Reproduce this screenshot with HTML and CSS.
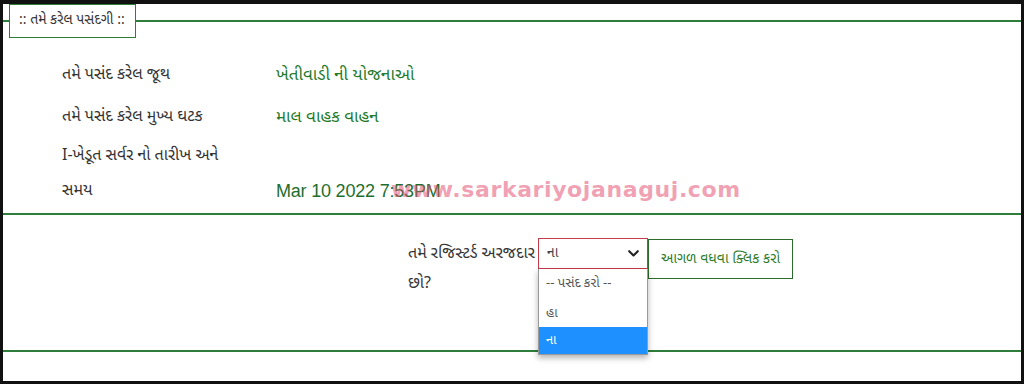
FILE: index.html
```html
<!DOCTYPE html>
<html lang="gu">
<head>
<meta charset="utf-8">
<title>તમે કરેલ પસંદગી</title>
<link rel="stylesheet" href="styles.css">
</head>
<body>
<div class="frame">
  <fieldset class="selection">
    <legend class="legend">:: તમે કરેલ પસંદગી ::</legend>
    <div class="rows">
      <div class="label row-single">તમે પસંદ કરેલ જૂથ</div>
      <div class="value row-single">ખેતીવાડી ની યોજનાઓ</div>
      <div class="label row-single">તમે પસંદ કરેલ મુખ્ય ઘટક</div>
      <div class="value row-single">માલ વાહક વાહન</div>
      <div class="label row-double">I-ખેડૂત સર્વર નો તારીખ અને<br>સમય</div>
      <div class="value row-double date"><span>Mar 10 2022 7:53PM</span></div>
    </div>
  </fieldset>
  <div class="form-row">
    <div class="question">તમે રજિસ્ટર્ડ અરજદાર<br>છો?</div>
    <div class="select-wrap">
      <div class="select">
        <span>ના</span>
        <svg class="chevron" width="11" height="7" viewBox="0 0 11 7"><path d="M1.2 1.2 L5.5 5.5 L9.8 1.2" fill="none" stroke="#222" stroke-width="2.1" stroke-linecap="round" stroke-linejoin="round"/></svg>
      </div>
      <ul class="dropdown">
        <li class="opt">-- પસંદ કરો --</li>
        <li class="opt">હા</li>
        <li class="opt selected">ના</li>
      </ul>
    </div>
    <button class="next" type="button">આગળ વધવા ક્લિક કરો</button>
  </div>
  <div class="footer"></div>
  <div class="watermark">www.sarkariyojanaguj.com</div>
</div>
</body>
</html>
```
FILE: styles.css
```css
* { box-sizing: border-box; }
html, body { margin: 0; padding: 0; background: #fff; }
body {
  font-family: "Noto Sans Gujarati", "Lohit Gujarati", "Shruti", "Noto Sans", "DejaVu Sans", sans-serif;
  color: #333;
}
.frame {
  position: relative;
  width: 1024px;
  height: 384px;
  border-style: solid;
  border-color: #111;
  border-width: 4px 3px 3px 3px;
  background: #fff;
  overflow: hidden;
}
.selection {
  margin: 0;
  padding: 0;
  border: 0;
  border-top: 2px solid #2f7d3a;
  border-bottom: 2px solid #2f7d3a;
  min-width: 0;
}
.legend {
  margin-left: 6px;
  padding: 0 10px 0 9px;
  height: 34px;
  line-height: 32px;
  border: 1px solid #2f7d3a;
  font-size: 14px;
  color: #333;
}
.rows {
  display: grid;
  grid-template-columns: 214px 1fr;
  padding: 17px 0 4px 59px;
}
.label { font-size: 16px; }
.value { font-size: 17px; color: #237a2a; }
.row-single { line-height: 42px; }
.row-double { line-height: 35px; }
.date {
  display: flex;
  align-items: flex-end;
  font-family: "Liberation Sans", Arial, sans-serif;
  font-size: 18px;
  letter-spacing: -0.2px;
  color: #1f6e2e;
}
.form-row {
  display: flex;
  align-items: flex-start;
  padding: 21px 0 0 405px;
  height: 137px;
  border-bottom: 2px solid #2f7d3a;
}
.question {
  font-size: 16px;
  line-height: 30px;
  padding-top: 4px;
  width: 130px;
}
.select-wrap {
  position: relative;
  width: 110px;
  margin-top: 2px;
}
.select {
  display: flex;
  align-items: center;
  justify-content: space-between;
  height: 31px;
  padding: 0 8px 0 8px;
  border: 1.5px solid #c73a4a;
  font-size: 14px;
  color: #444;
  background: #fff;
}
.chevron { display: block; }
.dropdown {
  position: absolute;
  left: 0;
  top: 31px;
  width: 110px;
  margin: 0;
  padding: 0;
  list-style: none;
  background: #fff;
  border: 1px solid #9a9a9a;
  border-top: 0;
  box-shadow: 0 3px 6px rgba(0,0,0,0.3);
  z-index: 2;
}
.opt {
  height: 29px;
  line-height: 31px;
  padding-left: 7px;
  font-size: 13px;
  color: #555;
}
.opt:first-child { line-height: 29px; }
.opt.selected {
  height: 27px;
  line-height: 27px;
  background: #1e90ff;
  color: #fff;
}
.next {
  margin: 3px 0 0 0;
  width: 145px;
  height: 40px;
  padding: 0;
  border: 1px solid #2d6b2d;
  background: #fff;
  color: #2a7a2a;
  font-family: inherit;
  font-size: 14px;
}
.watermark {
  position: absolute;
  left: 388px;
  top: 173px;
  font-family: "DejaVu Sans", Verdana, sans-serif;
  font-weight: bold;
  font-size: 22px;
  letter-spacing: 0.6px;
  color: rgba(228, 80, 115, 0.55);
  z-index: 3;
}
```
